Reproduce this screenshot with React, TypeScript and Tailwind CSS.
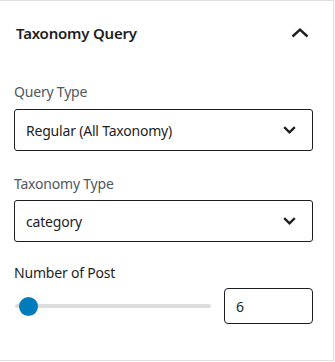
import React from "react";

const ChevronDown = () => (
  <svg width="13" height="8" viewBox="0 0 13 8" fill="none">
    <path d="M1.2 1.2 L6.5 6.3 L11.8 1.2" stroke="#1e1e1e" strokeWidth="2.3" />
  </svg>
);

const ChevronUp = () => (
  <svg width="18" height="10" viewBox="0 0 18 10" fill="none">
    <path d="M1.5 8.5 L9 1.7 L16.5 8.5" stroke="#1e1e1e" strokeWidth="2.4" />
  </svg>
);

const SelectBox = ({ value }: { value: string }) => (
  <div className="flex h-[42px] items-center justify-between rounded-[3px] border border-[#1e1e1e] pl-[11px] pr-[16px] text-[14px] tracking-[-0.2px] text-[#1e1e1e]">
    <span>{value}</span>
    <ChevronDown />
  </div>
);

export default function App() {
  return (
    <div
      className="h-[361px] w-[334px] border-t border-r border-b border-[#e0e0e0] bg-white"
      style={{ fontFamily: '"Noto Sans", "Open Sans", sans-serif' }}
    >
      <div className="flex h-[64px] items-center justify-between pl-4 pr-[24px]">
        <h2 className="text-[15px] font-semibold tracking-[-0.2px] text-[#1e1e1e]">Taxonomy Query</h2>
        <ChevronUp />
      </div>

      <div className="px-[14px] pr-[20px]">
        <div className="pt-[17px]">
          <label className="block text-[14px] leading-5 tracking-[-0.2px] text-[#50575e]">Query Type</label>
          <div className="mt-[7px]">
            <SelectBox value="Regular (All Taxonomy)" />
          </div>
        </div>

        <div className="pt-[23px]">
          <label className="block text-[14px] leading-5 tracking-[-0.2px] text-[#50575e]">Taxonomy Type</label>
          <div className="mt-[6px]">
            <SelectBox value="category" />
          </div>
        </div>

        <div className="pt-[21px]">
          <label className="block text-[14px] leading-5 tracking-[-0.2px] text-[#1e1e1e]">Number of Post</label>
          <div className="mt-[5px] flex items-center gap-[13px]">
            <div className="relative h-[36px] flex-1">
              <div className="absolute left-[1px] right-0 top-[16px] h-[4px] rounded-full bg-[#dddddd]" />
              <div className="absolute left-[5px] top-[9px] h-[19px] w-[19px] rounded-full bg-[#007cba]" />
            </div>
            <div className="flex h-[36px] w-[89px] items-center rounded-[4px] border border-[#1e1e1e] pl-[11px] text-[14px] text-[#1e1e1e]">
              6
            </div>
          </div>
        </div>
      </div>
    </div>
  );
}
